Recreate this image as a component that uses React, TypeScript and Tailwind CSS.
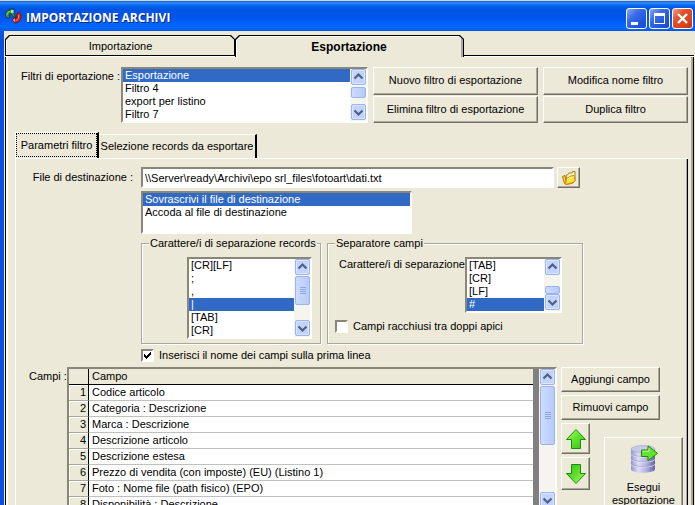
import type { ReactNode } from "react";
import clsx from "clsx";

const FILTERS = ["Esportazione", "Filtro 4", "export per listino", "Filtro 7"];
const WRITE_MODES = ["Sovrascrivi il file di destinazione", "Accoda al file di destinazione"];
const RECORD_SEPARATORS = ["[CR][LF]", ";", ",", "|", "[TAB]", "[CR]"];
const FIELD_SEPARATORS = ["[TAB]", "[CR]", "[LF]", "#"];

const FIELDS = [
  "Codice articolo",
  "Categoria : Descrizione",
  "Marca : Descrizione",
  "Descrizione articolo",
  "Descrizione estesa",
  "Prezzo di vendita (con imposte) (EU) (Listino 1)",
  "Foto : Nome file (path fisico) (EPO)",
  "Disponibilità : Descrizione",
];

const SUNKEN =
  "border-2 border-t-[#8a867a] border-l-[#8a867a] border-r-white border-b-white bg-white";

export default function App() {
  return (
    <div className="flex h-screen flex-col overflow-hidden bg-[#ece9d8] font-['Liberation_Sans',Arial,sans-serif] text-[11px] leading-[13px] text-black">
      <TitleBar />
      <div className="flex min-h-0 flex-1 border-l-4 border-[#0a4fe0] pt-1 pr-px pl-px">
        <div className="flex min-w-0 flex-1 flex-col">
          <MainTabs />
          <main className="min-h-0 flex-1 overflow-hidden border-r border-l border-black">
            <div className="min-h-full border-r-2 border-l-2 border-r-[#aca899] border-l-white pt-2.5">
              <FilterBar />
              <FilterTabs />
              <ParametersPanel />
            </div>
          </main>
        </div>
      </div>
    </div>
  );
}

function TitleBar() {
  return (
    <header className="flex h-[31px] shrink-0 items-center border-t border-[#ddd9c8] bg-linear-[180deg,#0058e6_0%,#2f8dff_6%,#0262ee_16%,#0054e3_28%,#0055eb_56%,#0262fa_74%,#0268ff_90%,#0058e0_100%] pr-0.5 pl-1">
      <AppLogo />
      <h1 className="ml-1 flex-1 pt-1 font-['Open_Sans',sans-serif] text-[12px] leading-4 font-bold text-white [text-shadow:1px_1px_0_#0a2a80]">
        IMPORTAZIONE ARCHIVI
      </h1>
      <div className="mt-1 flex gap-0.5">
        <CaptionButton label="Riduci a icona">
          <path d="M5 14h7v3H5z" fill="#fff" />
        </CaptionButton>
        <CaptionButton label="Ingrandisci">
          <path d="M5 5h11v11H5zM6 8v7h9V8z" fill="#fff" fillRule="evenodd" />
        </CaptionButton>
        <CaptionButton label="Chiudi" danger>
          <path d="M6 6l9 9M15 6l-9 9" stroke="#fff" strokeWidth="2.4" />
        </CaptionButton>
      </div>
    </header>
  );
}

function CaptionButton({
  label,
  danger = false,
  children,
}: {
  label: string;
  danger?: boolean;
  children: ReactNode;
}) {
  return (
    <button
      type="button"
      aria-label={label}
      className={clsx(
        "size-[21px] rounded-[3px] border border-white",
        danger
          ? "bg-linear-[135deg,#f0a088_0%,#e2512c_35%,#d8401a_75%,#c23410_100%]"
          : "bg-linear-[135deg,#8aaaf5_0%,#3a6cea_35%,#2257dd_70%,#1a48c8_100%]"
      )}
    >
      <svg viewBox="0 0 21 21" className="-m-px size-[21px]" aria-hidden="true">
        {children}
      </svg>
    </button>
  );
}

function MainTabs() {
  return (
    <div role="tablist" className="flex h-[22px] shrink-0">
      <div className="w-[230px] border-b border-white">
        <div className="h-full border-b border-black">
          <MainTab label="Importazione" />
        </div>
      </div>
      <div className="w-[229px]">
        <MainTab label="Esportazione" selected />
      </div>
      <div className="flex-1 border-b border-white">
        <div className="h-full border-b border-black" />
      </div>
    </div>
  );
}

function MainTab({ label, selected = false }: { label: string; selected?: boolean }) {
  return (
    <button
      type="button"
      role="tab"
      aria-selected={selected}
      className="block h-full w-full bg-black px-px pt-px [clip-path:polygon(0_4px,4px_0,calc(100%-4px)_0,100%_4px,100%_100%,0_100%)]"
    >
      <span
        className={clsx(
          "block h-full bg-white pt-px pl-px [clip-path:polygon(0_4px,4px_0,calc(100%-4px)_0,100%_4px,100%_100%,0_100%)]",
          selected && "border-r-2 border-[#aca899]"
        )}
      >
        <span
          className={clsx(
            "flex h-full items-center justify-center bg-[#ece9d8] [clip-path:polygon(0_3px,3px_0,100%_0,100%_100%,0_100%)]",
            selected && "text-[12px] font-bold"
          )}
        >
          {label}
        </span>
      </span>
    </button>
  );
}

function FilterBar() {
  return (
    <div className="flex pr-[3px] pl-[13px]">
      <label htmlFor="filters" className="w-[100px] pt-[3px]">
        Filtri di eportazione :
      </label>
      <ListBox
        id="filters"
        items={FILTERS}
        selected="Esportazione"
        className="h-14 flex-1"
        scroll="mt-px h-[11px]"
      />
      <div className="ml-[5px] grid w-[165px] gap-px">
        <PushButton>Nuovo filtro di esportazione</PushButton>
        <PushButton>Elimina filtro di esportazione</PushButton>
      </div>
      <div className="ml-[5px] grid w-[145px] gap-px">
        <PushButton>Modifica nome filtro</PushButton>
        <PushButton>Duplica filtro</PushButton>
      </div>
    </div>
  );
}

function FilterTabs() {
  return (
    <div role="tablist" className="mt-[9px] flex h-[26px] items-end pl-[7px]">
      <button
        type="button"
        role="tab"
        aria-selected="true"
        className="h-[26px] w-[84px] border-t border-r-2 border-l border-t-white border-r-black border-l-white pb-px"
      >
        <span className="flex h-full items-center justify-center border border-dotted border-black">
          Parametri filtro
        </span>
      </button>
      <button
        type="button"
        role="tab"
        aria-selected="false"
        className="h-6 w-[158px] border-t border-r-2 border-t-white border-r-black"
      >
        Selezione records da esportare
      </button>
    </div>
  );
}

function ParametersPanel() {
  return (
    <section className="mr-[3px] ml-[7px] border-t border-l border-white">
      <div className="border-r border-black">
        <div className="border-r border-[#aca899] pt-2">
          <div className="grid grid-cols-[125px_minmax(0,1fr)] pr-[103px]">
            <label htmlFor="target" className="pt-1 pr-2 text-right">
              File di destinazione :
            </label>
            <div className="flex gap-[3px] pr-[3px]">
              <input
                id="target"
                type="text"
                defaultValue="\\Server\ready\Archivi\epo srl_files\fotoart\dati.txt"
                className={clsx(SUNKEN, "h-[21px] min-w-0 flex-1 px-0.5 outline-none")}
              />
              <PushButton className="h-[21px] w-[23px]" label="Sfoglia">
                <FolderIcon />
              </PushButton>
            </div>
            <div className="col-start-2 mt-[3px]">
              <ListBox
                id="mode"
                label="Modalità di scrittura"
                items={WRITE_MODES}
                selected={WRITE_MODES[0]}
                className="h-[43px] w-[271px]"
              />
              <div className="mt-[3px] flex gap-1.5">
                <GroupBox title="Carattere/i di separazione records" className="w-[180px]">
                  <ListBox
                    id="records"
                    label="Carattere/i di separazione records"
                    items={RECORD_SEPARATORS}
                    selected="|"
                    className="ml-[45px] h-[82px] w-[125px]"
                    scroll="h-[29px]"
                    grip
                  />
                </GroupBox>
                <GroupBox title="Separatore campi" className="min-w-0 flex-1">
                  <div className="flex">
                    <label htmlFor="fields" className="w-[137px] pt-px pl-[11px] whitespace-nowrap">
                      Carattere/i di separazione
                    </label>
                    <ListBox
                      id="fields"
                      items={FIELD_SEPARATORS}
                      selected="#"
                      className="h-14 w-[97px]"
                      scroll="mt-[10px] h-2"
                    />
                  </div>
                  <CheckBox id="quotes" className="mt-[7px] ml-[7px]">
                    Campi racchiusi tra doppi apici
                  </CheckBox>
                </GroupBox>
              </div>
              <CheckBox id="names" checked className="mt-[5px]">
                Inserisci il nome dei campi sulla prima linea
              </CheckBox>
            </div>
          </div>
          <div className="mt-[5px] flex pr-[3px]">
            <span className="w-[51px] pt-[3px] pl-[13px] whitespace-nowrap">Campi :</span>
            <FieldTable />
            <Actions />
          </div>
        </div>
      </div>
    </section>
  );
}

function FieldTable() {
  return (
    <div className={clsx(SUNKEN, "flex h-36 min-w-0 flex-1 overflow-hidden")}>
      <div className="min-w-0 flex-1 bg-[#808080] pr-1.5">
        <table className="w-full table-fixed border-separate border-spacing-0 bg-white text-left">
          <thead>
            <tr className="h-4 bg-[#ece9d8]">
              <th className="w-5 border-r border-b border-black p-0" />
              <th className="border-b border-black p-0 pl-[3px] font-normal">Campo</th>
            </tr>
          </thead>
          <tbody>
            {FIELDS.map((field, index) => (
              <tr key={field} className="h-4">
                <th className="border-r border-b border-r-black border-b-[#aca899] bg-[#ece9d8] p-0 pr-0.5 text-right font-normal shadow-[inset_1px_1px_0_#fff]">
                  {index + 1}
                </th>
                <td className="border-b border-[#c0c0c0] p-0 pl-[3px]">{field}</td>
              </tr>
            ))}
          </tbody>
        </table>
      </div>
      <ScrollBar thumb="h-[59px]" grip />
    </div>
  );
}

function Actions() {
  return (
    <div className="ml-1 flex w-[122px] flex-col gap-[3px]">
      <PushButton className="h-[25px] w-[99px]">Aggiungi campo</PushButton>
      <PushButton className="h-[25px] w-[99px]">Rimuovi campo</PushButton>
      <div className="flex justify-between">
        <div className="flex flex-col gap-[3px]">
          <PushButton className="h-[31px] w-[29px]" label="Sposta su">
            <ArrowIcon />
          </PushButton>
          <PushButton className="h-[33px] w-[29px]" label="Sposta giù">
            <ArrowIcon down />
          </PushButton>
        </div>
        <PushButton className="mt-3.5 h-[74px] w-[79px] pt-1">
          <DatabaseIcon />
          <span className="mt-2">
            Esegui
            <br />
            esportazione
          </span>
        </PushButton>
      </div>
    </div>
  );
}

function PushButton({
  children,
  className,
  label,
}: {
  children: ReactNode;
  className?: string;
  label?: string;
}) {
  return (
    <button
      type="button"
      aria-label={label}
      className={clsx(
        "flex flex-col items-center justify-center border border-t-white border-r-[#716f64] border-b-[#716f64] border-l-white bg-[#ece9d8] shadow-[inset_-1px_-1px_0_#aca899]",
        className
      )}
    >
      {children}
    </button>
  );
}

function ListBox({
  id,
  label,
  items,
  selected,
  className,
  scroll,
  grip,
}: {
  id: string;
  label?: string;
  items: string[];
  selected: string;
  className?: string;
  scroll?: string;
  grip?: boolean;
}) {
  return (
    <div className={clsx(SUNKEN, "flex", className)}>
      <select
        id={id}
        aria-label={label}
        size={items.length}
        defaultValue={selected}
        className="h-full min-w-0 flex-1 overflow-hidden outline-none [scrollbar-width:none]"
      >
        {items.map((item) => (
          <option
            key={item}
            value={item}
            className="h-[13px] min-h-0 p-0 pl-0.5 leading-[13px] checked:bg-[#316ac5] checked:bg-linear-[#316ac5,#316ac5] checked:text-white"
          >
            {item}
          </option>
        ))}
      </select>
      {scroll ? <ScrollBar thumb={scroll} grip={grip} /> : null}
    </div>
  );
}

function ScrollBar({ thumb, grip = false }: { thumb: string; grip?: boolean }) {
  return (
    <div className="flex w-4 shrink-0 flex-col bg-[#f5f4ee]" aria-hidden="true">
      <ScrollArrow d="M4 9l4-4 4 4" />
      <div
        className={clsx(
          "ml-px flex shrink-0 flex-col items-center justify-center gap-px rounded-[2px] border border-[#9ab4ee] bg-linear-to-r from-[#cddcff] to-[#b6cbf9]",
          thumb
        )}
      >
        {grip ? [0, 1, 2, 3].map((n) => <i key={n} className="h-px w-1.5 bg-[#8aa9ec]" />) : null}
      </div>
      <div className="flex-1" />
      <ScrollArrow d="M4 6l4 4 4-4" />
    </div>
  );
}

function ScrollArrow({ d }: { d: string }) {
  return (
    <svg viewBox="0 0 16 17" className="h-[17px] w-4 shrink-0">
      <rect x="1.5" y="0.5" width="14" height="15" rx="1.5" fill="#c3d3fd" stroke="#9ab4ee" />
      <rect x="2.5" y="1.5" width="12" height="13" rx="1" fill="none" stroke="#dbe6ff" />
      <path d={d} transform="translate(0.5 0.5)" fill="none" stroke="#4d6185" strokeWidth="2.2" />
    </svg>
  );
}

function GroupBox({
  title,
  className,
  children,
}: {
  title: string;
  className?: string;
  children: ReactNode;
}) {
  return (
    <fieldset
      className={clsx(
        "h-[107px] border border-[#aca899] pt-[7px] shadow-[1px_1px_0_#fff,inset_1px_1px_0_#fff]",
        className
      )}
    >
      <legend className="ml-[7px] bg-[#ece9d8] px-px whitespace-nowrap">{title}</legend>
      {children}
    </fieldset>
  );
}

function CheckBox({
  id,
  checked = false,
  className,
  children,
}: {
  id: string;
  checked?: boolean;
  className?: string;
  children: ReactNode;
}) {
  return (
    <div className={clsx("flex h-[13px] items-center", className)}>
      <span className="grid size-[13px]">
        <input
          id={id}
          type="checkbox"
          defaultChecked={checked}
          className={clsx(SUNKEN, "peer col-start-1 row-start-1 size-[13px] appearance-none")}
        />
        <svg
          viewBox="0 0 13 13"
          className="pointer-events-none invisible z-10 col-start-1 row-start-1 size-[13px] peer-checked:visible"
          shapeRendering="crispEdges"
          aria-hidden="true"
        >
          <path d="M3 5h1v1h1v1h1V6h1V5h1V4h1V3h1v3H9v1H8v1H7v1H6v1H5V9H4V8H3z" />
        </svg>
      </span>
      <label htmlFor={id} className="ml-[5px] whitespace-nowrap">
        {children}
      </label>
    </div>
  );
}

function AppLogo() {
  return (
    <svg viewBox="0 0 18 18" className="h-[18px] w-[18px]" aria-hidden="true">
      <g strokeWidth="0.8">
        <path d="M1.500 8.500C1.500 5 3 3 6 3V2h4v5l2 3H9.500L7 6.500C5 6 4.800 8 5.500 11H3.500z" fill="#3f9a3c" stroke="#16351a" />
        <path d="M15 5l2 3c.5 4-1.500 7-5 7.500v1L8 13l3-3v2c2 0 2.500-1.500 1.500-4z" fill="#ee2216" stroke="#5c1010" />
      </g>
      <path d="M7 3h2.500v3H7z" fill="#c9d4cc" />
      <path d="M9 13l2-1.500V15z" fill="#d8c4c4" />
      <path d="M3 8c0-2 1-3.500 3-3.700" stroke="#8fd070" fill="none" />
      <path d="M14.500 8c.6 3-.5 4.700-2.500 5.500" stroke="#ff7a68" fill="none" />
    </svg>
  );
}

function FolderIcon() {
  return (
    <svg viewBox="0 0 16 16" className="size-4" aria-hidden="true">
      <path d="M5 5.500l2-1 1-1.500h3l.5-1.500H14V11l-2 2-6 1.500z" fill="#fff6c8" stroke="#b07a08" />
      <path d="M1.500 6.500l2.500-1 1.500 9-2-1z" fill="#f6d850" stroke="#b07a08" />
      <path d="M4.500 14.500L5.500 8l3-1 1-1 3.500-.5 1 5-2 2z" fill="#ffe03c" stroke="#c8920c" />
      <path d="M6.500 9l2.500-1 3.500-1" stroke="#fff8b8" fill="none" />
    </svg>
  );
}

function ArrowIcon({ down = false }: { down?: boolean }) {
  return (
    <svg viewBox="0 0 22 22" className={clsx("size-[22px]", down && "rotate-180")} aria-hidden="true">
      <defs>
        <linearGradient id={down ? "arrow-down" : "arrow-up"} x1="0" x2="1" y1="0" y2="1">
          <stop offset="0" stopColor="#b4ff60" />
          <stop offset="0.5" stopColor="#5ce02c" />
          <stop offset="1" stopColor="#35c010" />
        </linearGradient>
      </defs>
      <path
        d="M11 1.500L20.500 11.500H15.500V20.500H6.500V11.500H1.500z"
        fill={down ? "url(#arrow-down)" : "url(#arrow-up)"}
        stroke="#1d8a10"
      />
    </svg>
  );
}

function DatabaseIcon() {
  return (
    <svg viewBox="0 0 28 28" className="size-7" aria-hidden="true">
      <defs>
        <linearGradient id="db" x1="0" x2="1">
          <stop offset="0" stopColor="#9494cc" />
          <stop offset="0.3" stopColor="#dedef6" />
          <stop offset="0.65" stopColor="#b0b0de" />
          <stop offset="1" stopColor="#62629e" />
        </linearGradient>
      </defs>
      <path d="M1 4v20c0 5 24 5 24 0V4z" fill="url(#db)" />
      <ellipse cx="13" cy="4" rx="12" ry="3.500" fill="#c8c8ec" stroke="#a4a4d0" strokeWidth="0.600" />
      <path
        d="M1 9c0 4 24 4 24 0M1 14c0 4 24 4 24 0M1 19c0 4 24 4 24 0"
        fill="none"
        stroke="#f0f0ff"
        strokeWidth="0.800"
      />
      <path
        d="M1 8.400c0 4 24 4 24 0M1 13.400c0 4 24 4 24 0M1 18.400c0 4 24 4 24 0"
        fill="none"
        stroke="#8484b8"
        strokeWidth="0.500"
      />
      <path d="M11.500 5h6.500V.8L27.500 8.300 18 15.800v-4.300h-6.500z" fill="#66e02e" stroke="#1d8a10" />
      <path d="M12.500 6.300h6.500V3.200" fill="none" stroke="#c0ff88" />
    </svg>
  );
}
